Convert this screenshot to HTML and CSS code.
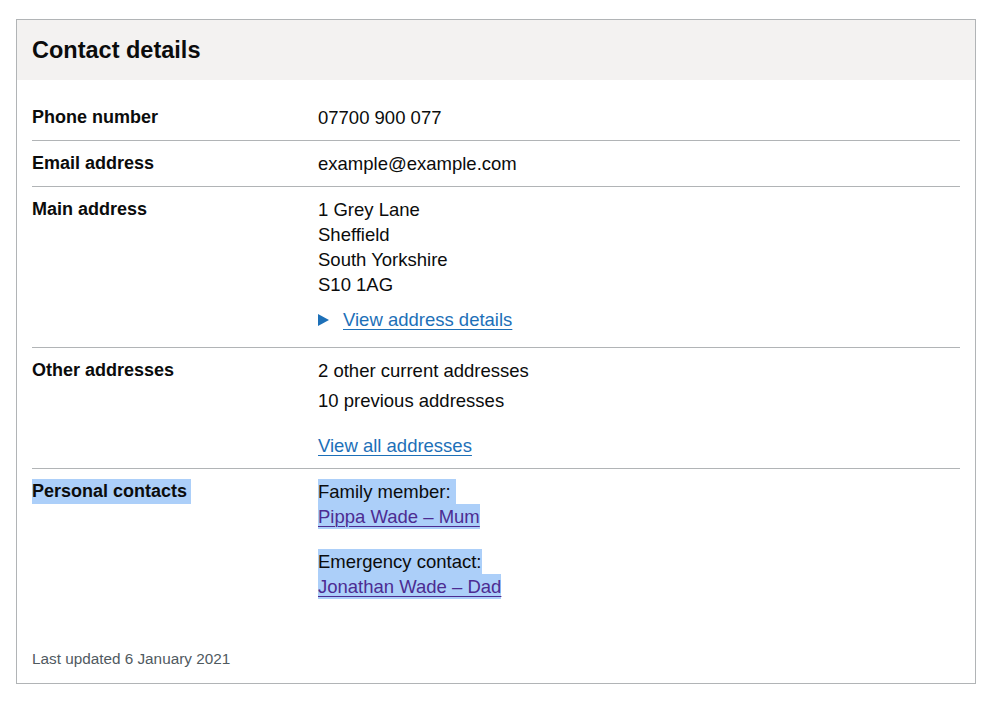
FILE: index.html
```html
<!DOCTYPE html>
<html lang="en">
<head>
<meta charset="utf-8">
<title>Contact details</title>
<link rel="stylesheet" href="styles.css">
</head>
<body>
<div class="card">
  <div class="card-header"><h2 class="card-title">Contact details</h2></div>
  <div class="card-content">
    <dl class="summary">
      <div class="row">
        <dt class="key">Phone number</dt>
        <dd class="value">07700 900 077</dd>
      </div>
      <div class="row">
        <dt class="key">Email address</dt>
        <dd class="value">example@example.com</dd>
      </div>
      <div class="row">
        <dt class="key">Main address</dt>
        <dd class="value">
          <div class="address">1 Grey Lane<br>Sheffield<br>South Yorkshire<br>S10 1AG</div>
          <details class="details">
            <summary class="summary-toggle">
              <svg class="arrow" width="11" height="12" viewBox="0 0 11 12" aria-hidden="true"><polygon points="0,0 11,6 0,12" fill="#1d70b8"/></svg>
              <span class="link">View address details</span>
            </summary>
          </details>
        </dd>
      </div>
      <div class="row">
        <dt class="key">Other addresses</dt>
        <dd class="value">
          <p class="line">2 other current addresses</p>
          <p class="line line-gap">10 previous addresses</p>
          <p class="line line-link"><a class="link" href="#">View all addresses</a></p>
        </dd>
      </div>
      <div class="row">
        <dt class="key"><span class="sel sel-key">Personal contacts</span></dt>
        <dd class="value">
          <div class="group">
            <span class="sel sel-trail">Family member:</span>
            <span class="sel"><a class="link visited" href="#">Pippa Wade – Mum</a></span>
          </div>
          <div class="group">
            <span class="sel">Emergency contact:</span>
            <span class="sel"><a class="link visited" href="#">Jonathan Wade – Dad</a></span>
          </div>
        </dd>
      </div>
    </dl>
    <p class="updated">Last updated 6 January 2021</p>
  </div>
</div>
</body>
</html>
```
FILE: styles.css
```css
body {
  margin: 0;
  padding: 19px 23px 0 16px;
  font-family: "Liberation Sans", Arial, sans-serif;
  color: #0b0c0c;
  background: #ffffff;
}

.card {
  width: 960px;
  box-sizing: border-box;
  border: 1px solid #b1b4b6;
}

.card-header {
  background: #f3f2f1;
  padding: 15px;
}

.card-title {
  margin: 0;
  font-size: 23.5px;
  line-height: 30px;
  font-weight: 700;
}

.card-content {
  padding: 15px 15px 14px;
}

.summary {
  margin: 0;
}

.row {
  display: grid;
  grid-template-columns: 286px 1fr;
  padding: 10px 0;
  border-bottom: 1px solid #b1b4b6;
}

.row:last-child {
  border-bottom: 0;
}

.key {
  margin: 0;
  font-size: 18px;
  line-height: 25px;
  font-weight: 700;
}

.value {
  margin: 0;
  font-size: 18.5px;
  line-height: 25px;
}

.address {
  line-height: 25px;
}

.details {
  margin: 10px 0 5px;
}

.summary-toggle {
  display: flex;
  align-items: center;
  gap: 14px;
  list-style: none;
  cursor: pointer;
}

.summary-toggle::-webkit-details-marker {
  display: none;
}

.arrow {
  display: block;
  flex: none;
}

.link {
  color: #1d70b8;
  text-decoration: underline;
  text-decoration-thickness: 1px;
  text-underline-offset: 3px;
}

.link.visited {
  color: #4c2c92;
}

.line {
  margin: 0;
}

.line-gap {
  margin-top: 5px;
}

.line-link {
  margin-top: 20px;
}

.group {
  margin-bottom: 20px;
}

.group:last-child {
  margin-bottom: 0;
}

.sel {
  display: table;
  background: #accff9;
}

.sel-key {
  padding-right: 4px;
}

.sel-trail {
  padding-right: 5px;
}

.updated {
  margin: 40px 0 0;
  font-size: 15.3px;
  line-height: 20px;
  color: #505a5f;
}
```
